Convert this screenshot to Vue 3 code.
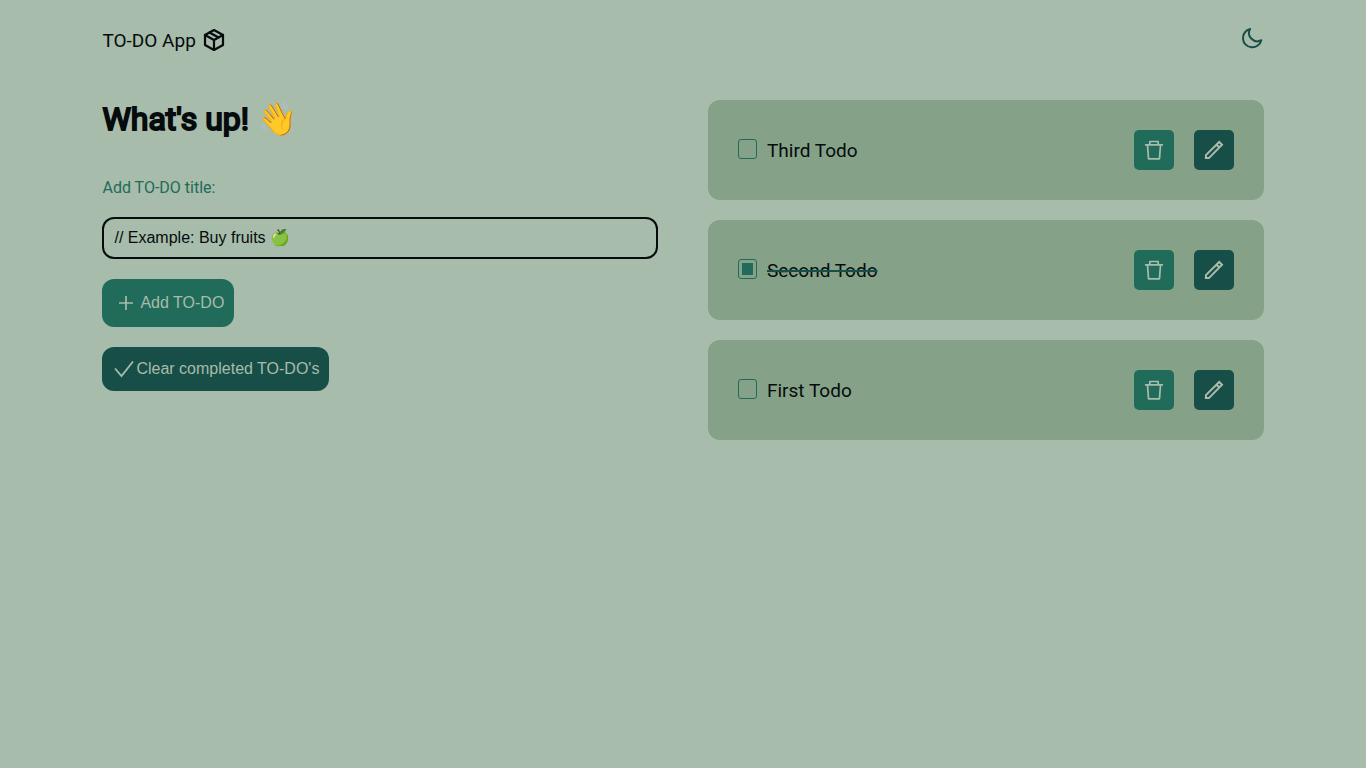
<script setup>
import { ref } from 'vue'

const title = ref('')
const todos = ref([
  { id: 3, text: 'Third Todo', done: false },
  { id: 2, text: 'Second Todo', done: true },
  { id: 1, text: 'First Todo', done: false }
])

function add() {
  const text = title.value.trim()
  if (!text) return
  todos.value.unshift({ id: Date.now(), text, done: false })
  title.value = ''
}
function clearDone() {
  todos.value = todos.value.filter((t) => !t.done)
}
function remove(id) {
  todos.value = todos.value.filter((t) => t.id !== id)
}
</script>

<template>
  <div class="page">
    <header class="header">
      <div class="brand">
        <span>TO-DO App</span>
        <svg width="24" height="24" viewBox="0 0 24 24" fill="none" stroke="currentColor" stroke-width="2.200" stroke-linecap="round" stroke-linejoin="round" aria-hidden="true">
          <path d="M12 2 21 7v10l-9 5-9-5V7z" />
          <path d="M3 7l9 5 9-5M12 12v10M7.500 4.500l9 5" />
        </svg>
      </div>
      <button class="theme" type="button" aria-label="Toggle dark mode">
        <svg width="24" height="24" viewBox="0 0 24 24" fill="none" stroke="currentColor" stroke-width="2" stroke-linejoin="round" aria-hidden="true">
          <path d="M10 3A9.300 9.300 0 1 0 21.300 14.200 8.300 8.300 0 0 1 10 3z" />
        </svg>
      </button>
    </header>

    <main class="main">
      <form class="form" @submit.prevent="add">
        <h1>What's up! 👋</h1>
        <label for="todo-title">Add TO-DO title:</label>
        <input id="todo-title" v-model="title" class="field" type="text" placeholder="// Example: Buy fruits 🍏" />
        <button class="action add" type="submit">
          <svg width="24" height="24" viewBox="0 0 24 24" fill="none" stroke="currentColor" stroke-width="1.700" aria-hidden="true">
            <path d="M12 5v14M5 12h14" />
          </svg>
          <span>Add TO-DO</span>
        </button>
        <button class="action clear" type="button" @click="clearDone">
          <svg width="24" height="24" viewBox="0 0 24 24" fill="none" stroke="currentColor" stroke-width="1.800" aria-hidden="true">
            <path d="M3 11.500l6.500 7.500L21 4.500" />
          </svg>
          <span>Clear completed TO-DO's</span>
        </button>
      </form>

      <ul class="list">
        <li v-for="t in todos" :key="t.id" class="card">
          <input :id="'todo-' + t.id" v-model="t.done" class="tick" type="checkbox" />
          <label :for="'todo-' + t.id" class="name" :class="{ done: t.done }">{{ t.text }}</label>
          <button class="tool remove" type="button" :aria-label="'Delete ' + t.text" @click="remove(t.id)">
            <svg width="20" height="20" viewBox="0 0 20 20" fill="none" stroke="currentColor" stroke-width="1.700" stroke-linejoin="round" aria-hidden="true">
              <path d="M1 4.900h18M5.800 4.900V1.500h8.400v3.400M3.500 4.900l1 13.900h11l1-13.900" />
            </svg>
          </button>
          <button class="tool edit" type="button" :aria-label="'Edit ' + t.text">
            <svg width="20" height="20" viewBox="0 0 20 20" fill="none" stroke="currentColor" stroke-width="2" aria-hidden="true">
              <path d="M1.900 18.100v-3L15.200 2l2.800 2.800L4.900 18.100zM12.500 4.700l2.800 2.800" />
            </svg>
          </button>
        </li>
      </ul>
    </main>
  </div>
</template>

<style>
body {
  margin: 0;
  background: #a7bcaa;
}
</style>

<style scoped>
.page {
  box-sizing: border-box;
  padding: 20px 7.5%;
  font-family: Roboto, "Liberation Sans", sans-serif;
  color: #060b0d;
}
.header {
  display: flex;
  justify-content: space-between;
  align-items: center;
  height: 40px;
}
.brand {
  display: flex;
  align-items: center;
  gap: 6px;
  font-size: 19px;
}
button {
  border: 0;
  padding: 0;
  color: #a7bcaa;
  cursor: pointer;
}
svg {
  display: block;
  flex: none;
}
.theme {
  margin-bottom: 4px;
  background: none;
  color: #184e48;
}
.main {
  display: grid;
  grid-template-columns: 1fr 1fr;
  gap: 50px;
  margin-top: 40px;
  align-items: start;
}
.form {
  display: flex;
  flex-direction: column;
  align-items: flex-start;
}
h1 {
  margin: 0;
  font-size: 32px;
  font-weight: 400;
  line-height: 38px;
  -webkit-text-stroke: 2px currentColor;
}
.form label {
  margin: 40px 0 20px;
  font-size: 16px;
  line-height: 19px;
  color: #216b5a;
}
.field {
  box-sizing: border-box;
  width: 100%;
  height: 42px;
  padding: 0 10px;
  border: 2px solid #060b0d;
  border-radius: 12px;
  outline: 0;
  background: none;
  font-family: "Liberation Sans", Arial, sans-serif;
  font-size: 16px;
  color: #060b0d;
}
.field::placeholder {
  color: #060b0d;
  opacity: 1;
}
.action {
  display: flex;
  align-items: center;
  margin-top: 20px;
  padding: 0 10px;
  border-radius: 12px;
  font-family: "Liberation Sans", Arial, sans-serif;
  font-size: 16px;
}
.add {
  height: 48px;
  gap: 2px;
  padding-left: 12px;
  background: #216b5a;
}
.clear {
  height: 44px;
  background: #184e48;
}
.list {
  display: grid;
  gap: 20px;
  margin: 0;
  padding: 0;
  list-style: none;
}
.card {
  display: flex;
  align-items: center;
  padding: 30px;
  border-radius: 12px;
  background: #85a188;
}
.tick {
  appearance: none;
  box-sizing: border-box;
  width: 19px;
  height: 20px;
  margin: 0 10px 3px 0;
  padding: 3px;
  border: 1px solid #216b5a;
  border-radius: 3px;
}
.tick:checked {
  background: #216b5a content-box;
}
.name {
  margin-right: auto;
  font-size: 19px;
}
.done {
  text-decoration: line-through 2px #184e48;
}
.tool {
  display: grid;
  place-items: center;
  width: 40px;
  height: 40px;
  margin-left: 20px;
  border-radius: 5px;
}
.remove {
  background: #216b5a;
}
.edit {
  background: #184e48;
}
</style>
